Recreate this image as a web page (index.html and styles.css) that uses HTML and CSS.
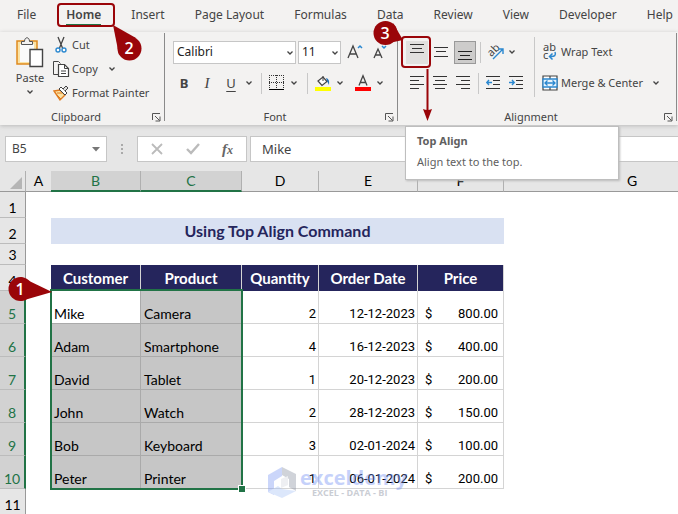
FILE: index.html
```html
<!DOCTYPE html>
<html lang="en">
<head>
<meta charset="utf-8">
<title>Using Top Align Command</title>
<link rel="stylesheet" href="styles.css">
</head>
<body>
<svg class="defs" aria-hidden="true">
  <symbol id="chev" viewBox="0 0 8 8"><path d="M1.500 2.500L4 5L6.500 2.500" fill="none" stroke="#444" stroke-width="1.300"/></symbol>
  <symbol id="launch" viewBox="0 0 9 9"><path d="M.5 7V.5H8M3 3l4.500 4.500M8 3.500V8H3.500" fill="none" stroke="#555"/></symbol>
</svg>

<nav class="tabs" aria-label="Ribbon tabs">
  <button>File</button><button class="active">Home</button><button>Insert</button><button>Page Layout</button><button>Formulas</button><button>Data</button><button>Review</button><button>View</button><button>Developer</button><button>Help</button>
</nav>

<div class="ribbon">
  <section class="group clipboard">
    <div class="tools">
      <button class="paste">
        <svg width="28" height="31" viewBox="0 0 28 31"><path d="M1 4h20v23H1z" fill="#fbe3a5" stroke="#e08a1e" stroke-width="1.500"/><path d="M4 7h14v18H4z" fill="#fafafa"/><path d="M5.500 7.500V4.500h3C8.500-.5 13.500-.5 13.500 4.500h3v3z" fill="#f3f2f1" stroke="#555"/><path d="M14 12.500h12.500v17H14z" fill="#fff" stroke="#444" stroke-width="1.400"/></svg>
        <span>Paste</span>
        <svg width="8" height="8"><use href="#chev"/></svg>
      </button>
      <div class="stack">
        <button><svg width="16" height="16" viewBox="0 0 16 16"><path d="M5 0l4.500 11M11 0L6.500 11" stroke="#444" stroke-width="1.300"/><circle cx="5" cy="13" r="2" fill="#fff" stroke="#2b88d0" stroke-width="1.400"/><circle cx="11" cy="13" r="2" fill="#fff" stroke="#2b88d0" stroke-width="1.400"/></svg>Cut</button>
        <button><svg width="16" height="16" viewBox="0 0 16 16"><path d="M5 13.500H.5V.5h5l2 2" fill="none" stroke="#444"/><path d="M5.500 3.500h6l4 4v8h-10z" fill="#fff" stroke="#444" stroke-width="1.200"/><path d="M11.500 3.500v4h4M8 10h5M8 12.500h5" fill="none" stroke="#444"/></svg>Copy<svg class="gap" width="8" height="8"><use href="#chev"/></svg></button>
        <button><svg width="16" height="16" viewBox="0 0 16 16"><path d="M1 6l6-1 5 5-5 5z" fill="#fbe3a5" stroke="#e07a1e" stroke-width="1.400"/><path d="M3 9l5 5M4 8h5" stroke="#e07a1e"/><path d="M6 4l2-2 6 6-2 2z" fill="#fff" stroke="#444"/><path d="M10 4l3-3 2 2-3 3" fill="#ddd" stroke="#444"/></svg>Format Painter</button>
      </div>
    </div>
    <footer><span>Clipboard</span><svg width="9" height="9"><use href="#launch"/></svg></footer>
  </section>

  <section class="group font">
    <div class="tools rows">
      <div class="row pickers">
        <label class="pick wide"><select aria-label="Font"><option>Calibri</option></select><svg width="8" height="8"><use href="#chev"/></svg></label>
        <label class="pick"><select aria-label="Font size"><option>11</option></select><svg width="8" height="8"><use href="#chev"/></svg></label>
        <button aria-label="Increase font size"><svg width="18" height="18" viewBox="0 0 18 18"><path d="M2 15L7 3l5 12M4 11h6" fill="none" stroke="#444" stroke-width="1.300"/><path d="M12 5l2-2 2 2" fill="none" stroke="#2b88d0" stroke-width="1.500"/></svg></button>
        <button aria-label="Decrease font size"><svg width="18" height="18" viewBox="0 0 18 18"><path d="M2 15L6 6l4 9M3.500 12h5" fill="none" stroke="#444" stroke-width="1.300"/><path d="M10 3l2 2 2-2" fill="none" stroke="#2b88d0" stroke-width="1.500"/></svg></button>
      </div>
      <div class="row format">
        <button class="b">B</button><button class="i">I</button><button class="u">U</button><svg width="8" height="8"><use href="#chev"/></svg>
        <i class="sep"></i>
        <button aria-label="Borders"><svg width="16" height="16" viewBox="0 0 16 16"><path d="M0 .5h15M0 7.500h15M.5 0v14M7.500 0v14M14.500 0v14" stroke="#333" stroke-dasharray="1 1"/><path d="M0 14.500h15" stroke="#000"/></svg></button><svg width="8" height="8"><use href="#chev"/></svg>
        <i class="sep"></i>
        <button aria-label="Fill color"><svg width="16" height="16" viewBox="0 0 16 16"><path d="M0 12h16v4H0z" fill="#ff0"/><path d="M3 6l5-4 4 4.500-5 4z" fill="#fff" stroke="#444" stroke-width="1.200"/><path d="M8 6V1" stroke="#444"/><path d="M11 3q4 1 3 7l-2-4z" fill="#2170b8"/></svg></button><svg width="8" height="8"><use href="#chev"/></svg>
        <i></i>
        <button aria-label="Font color"><svg width="16" height="16" viewBox="0 0 16 16"><path d="M0 12h16v4H0z" fill="red"/><path d="M4 10.500L8 .8l4 9.700M5.500 7.500h5" fill="none" stroke="#444" stroke-width="1.300"/></svg></button><svg width="8" height="8"><use href="#chev"/></svg>
      </div>
    </div>
    <footer><span>Font</span><svg width="9" height="9"><use href="#launch"/></svg></footer>
  </section>

  <section class="group align">
    <div class="tools">
      <div class="rows">
        <div class="row">
          <button class="hover" aria-label="Top Align"><svg width="14" height="16" viewBox="0 0 14 16"><path d="M0 .5h14M2 4.500h10M0 8.500h14" stroke="#333"/></svg></button>
          <button aria-label="Middle Align"><svg width="14" height="16" viewBox="0 0 14 16"><path d="M0 3.500h14M2 7.500h10M0 12.500h14" stroke="#333"/></svg></button>
          <button class="on" aria-label="Bottom Align"><svg width="14" height="16" viewBox="0 0 14 16"><path d="M0 7.500h14M2 11.500h10M0 15.500h14" stroke="#222"/></svg></button>
          <i class="sep"></i>
          <button aria-label="Orientation"><svg width="18" height="18" viewBox="0 0 18 18"><text x="0" y="12" transform="rotate(-45 5 8)">ab</text><path d="M6 16L16 6M11 6h5v5" fill="none" stroke="#2b88d0" stroke-width="1.400"/></svg></button><svg width="8" height="8"><use href="#chev"/></svg>
        </div>
        <div class="row">
          <button aria-label="Align left"><svg width="14" height="14" viewBox="0 0 14 14"><path d="M0 .5h14M0 4.500h9M0 8.500h14M0 12.500h9" stroke="#333"/></svg></button>
          <button aria-label="Center"><svg width="14" height="14" viewBox="0 0 14 14"><path d="M0 .5h14M2 4.500h10M0 8.500h14M2 12.500h10" stroke="#333"/></svg></button>
          <button aria-label="Align right"><svg width="14" height="14" viewBox="0 0 14 14"><path d="M0 .5h14M5 4.500h9M0 8.500h14M5 12.500h9" stroke="#333"/></svg></button>
          <i class="sep"></i>
          <button aria-label="Decrease indent"><svg width="14" height="14" viewBox="0 0 14 14"><path d="M0 .5h14M7 4.500h7M7 8.500h7M0 12.500h14" stroke="#333"/><path d="M6 6.500H1M3 4L.8 6.500L3 9" fill="none" stroke="#2b88d0" stroke-width="1.400"/></svg></button>
          <button aria-label="Increase indent"><svg width="14" height="14" viewBox="0 0 14 14"><path d="M0 .5h14M7 4.500h7M7 8.500h7M0 12.500h14" stroke="#333"/><path d="M0 6.500h5M3 4l2.200 2.500L3 9" fill="none" stroke="#2b88d0" stroke-width="1.400"/></svg></button>
        </div>
      </div>
      <i class="rule"></i>
      <div class="rows wrap">
        <button><svg width="16" height="16" viewBox="0 0 16 16"><text x="1" y="7">ab</text><text x="1" y="15">c</text><path d="M13 8q2 5-5 4.500M10.500 9.500L7.500 12.500l3 3" fill="none" stroke="#2b88d0" stroke-width="1.500"/></svg>Wrap Text</button>
        <button><svg width="16" height="16" viewBox="0 0 16 16"><path d="M1 1h14v14H1zM8 1v3M8 12v3" fill="#fff" stroke="#444" stroke-width="1.200"/><path d="M1 4h14v8H1z" fill="#e8f3fb" stroke="#2b88d0" stroke-width="1.300"/><path d="M3 8h10M5.500 5.500L3 8l2.500 2.500M10.500 5.500L13 8l-2.500 2.500" fill="none" stroke="#2b88d0" stroke-width="1.300"/></svg>Merge &amp; Center<svg class="gap" width="8" height="8"><use href="#chev"/></svg></button>
      </div>
    </div>
    <footer><span>Alignment</span><svg width="9" height="9"><use href="#launch"/></svg></footer>
  </section>
</div>

<div class="formula">
  <label class="box name"><input aria-label="Name box" value="B5"><svg width="8" height="5" viewBox="0 0 8 5"><path d="M0 0h8L4 4.500z" fill="#777"/></svg></label>
  <svg class="dots" width="2" height="11" viewBox="0 0 2 11"><path d="M0 0h2v2H0zM0 4h2v2H0zM0 8h2v2H0z" fill="#aaa"/></svg>
  <div class="box acts">
    <button aria-label="Cancel"><svg width="12" height="12" viewBox="0 0 12 12"><path d="M1 1l10 10M11 1L1 11" stroke="#bbb" stroke-width="1.800"/></svg></button>
    <button aria-label="Enter"><svg width="14" height="12" viewBox="0 0 14 12"><path d="M1 6l4 4 8-9" fill="none" stroke="#bbb" stroke-width="2.400"/></svg></button>
    <button class="fx" aria-label="Insert function">f<small>x</small></button>
  </div>
  <input class="box value" aria-label="Formula bar" value="Mike">
</div>

<main class="sheet">
<table>
  <colgroup><col class="c0"><col class="cA"><col class="cB"><col class="cC"><col class="cD"><col class="cE"><col class="cF"><col></colgroup>
  <thead><tr><th class="corner"><svg width="12" height="12" viewBox="0 0 12 12"><path d="M12 0v12H0z" fill="#b5b5b5"/></svg></th><th>A</th><th class="sel">B</th><th class="sel">C</th><th>D</th><th>E</th><th>F</th><th>G</th></tr></thead>
  <tbody>
    <tr class="r1"><th>1</th><td colspan="7"></td></tr>
    <tr class="r2"><th>2</th><td></td><td class="title" colspan="5">Using Top Align Command</td><td></td></tr>
    <tr class="r3"><th>3</th><td colspan="7"></td></tr>
    <tr class="heads"><th>4</th><td></td><td>Customer</td><td>Product</td><td>Quantity</td><td>Order Date</td><td>Price</td><td></td></tr>
    <tr class="data first"><th>5</th><td></td><td>Mike</td><td>Camera</td><td>2</td><td>12-12-2023</td><td><div><span>$</span><span>800.00</span></div></td><td></td></tr>
    <tr class="data"><th>6</th><td></td><td>Adam</td><td>Smartphone</td><td>4</td><td>16-12-2023</td><td><div><span>$</span><span>400.00</span></div></td><td></td></tr>
    <tr class="data"><th>7</th><td></td><td>David</td><td>Tablet</td><td>1</td><td>20-12-2023</td><td><div><span>$</span><span>200.00</span></div></td><td></td></tr>
    <tr class="data"><th>8</th><td></td><td>John</td><td>Watch</td><td>2</td><td>28-12-2023</td><td><div><span>$</span><span>150.00</span></div></td><td></td></tr>
    <tr class="data"><th>9</th><td></td><td>Bob</td><td>Keyboard</td><td>3</td><td>02-01-2024</td><td><div><span>$</span><span>100.00</span></div></td><td></td></tr>
    <tr class="data"><th>10</th><td></td><td>Peter</td><td>Printer</td><td>1</td><td>06-01-2024</td><td><div><span>$</span><span>200.00</span></div></td><td></td></tr>
    <tr class="r11"><th>11</th><td colspan="7"></td></tr>
  </tbody>
</table>
<div class="range"></div>
<div class="mark">
  <svg width="28" height="31" viewBox="0 0 28 31"><path d="M14 0L0 8v17l6 3V14l8-5z" fill="#7f9bf5"/><path d="M14 0l14 7v17l-7-4v-8l-7-4z" fill="#8b93a3"/><path d="M0 25l10-6 4 3 14 2-14 7z" fill="#a9c4f7"/><path d="M13 12l7-3v9l-7 3z" fill="#d5d9e0"/></svg>
  <div><b>exceldemy</b><span>EXCEL - DATA - BI</span></div>
</div>
</main>

<div class="tip" role="tooltip"><b>Top Align</b><span>Align text to the top.</span></div>

<svg class="notes" width="678" height="514" viewBox="0 0 678 514">
  <g fill="none" stroke="#9a0509" stroke-width="2"><rect x="58" y="4" width="56" height="22" rx="3"/><rect x="402" y="37" width="28" height="30" rx="3"/><path d="M427.500 69v42"/></g>
  <g fill="#9a0509">
    <path d="M423 109q4.500 2 9 0l-4.500 12z"/>
    <circle cx="129.500" cy="48.500" r="12"/><path d="M113 25l23 13-17 17z"/>
    <circle cx="385.500" cy="33" r="12"/><path d="M393 23l10 17-14 3z"/>
    <circle cx="20.500" cy="289" r="12"/><path d="M52 292l-31-15v24z"/>
  </g>
  <g class="nums" text-anchor="middle"><text x="129" y="54">2</text><text x="385" y="39">3</text><text x="20" y="295">1</text></g>
</svg>
</body>
</html>
```

FILE: styles.css
```css
* { box-sizing: border-box; }
body {
  margin: 0;
  position: relative;
  min-height: 100vh;
  overflow: hidden;
  background: #e6e6e6;
  color: #444;
  font: 12px/16px "Noto Sans", "Open Sans", sans-serif;
}
button, input, select { font: inherit; color: inherit; }
button { border: 0; padding: 0; background: none; white-space: nowrap; }
svg { flex: none; display: block; overflow: visible; }
.defs { position: absolute; width: 0; height: 0; }

/* Tabs */
.tabs {
  display: flex;
  justify-content: space-between;
  height: 32px;
  padding: 0 5px 0 17px;
  background: #f3f2f1;
}
.tabs button { height: 30px; }
.tabs .active {
  height: 25px;
  padding-top: 5px;
  border-bottom: 1px solid #217346;
  font-weight: 600;
}

/* Ribbon */
.ribbon { display: flex; height: 93px; background: #f3f2f1; box-shadow: 0 1px 4px #bbb; position: relative; font-size: 11px; }
.group {
  display: flex;
  flex-direction: column;
  margin: 1px 0 4px;
  border-right: 1px solid #8a8a8a;
}
.clipboard { flex: 0 0 165px; }
.font { flex: 0 0 233px; }
.align { flex: 1; margin-right: 1px; }
.tools { display: flex; flex: 1; padding-top: 4px; }
.group footer { display: flex; align-items: center; height: 8px; line-height: 8px; padding-right: 3px; }
.group footer span { flex: 1; text-align: center; }
.clipboard .tools { padding-left: 15px; gap: 8px; }
.paste { display: flex; flex-direction: column; align-items: center; width: 30px; height: 60px; gap: 2px; }
.stack button, .wrap button { display: flex; align-items: center; gap: 3px; height: 24px; }
.stack .gap { margin-left: 7px; }
.wrap .gap { margin-left: 6px; }
.stack { margin-top: -4px; }

.rows { display: flex; flex-direction: column; gap: 7px; padding-top: 3px; }
.font .rows { padding: 7px 0 0 8px; }
.row { display: flex; align-items: center; height: 24px; }
.row button { display: grid; place-items: center; width: 24px; height: 24px; }
.pickers { gap: 2px; }
.pick { position: relative; width: 43px; height: 23px; font-size: 12px; }
.pick.wide { width: 123px; }
.pick select {
  appearance: none;
  width: 100%;
  height: 100%;
  padding: 0 3px;
  border: 1px solid #c6c6c6;
  border-radius: 0;
  background: #fff;
  color: #222;
}
.pick svg { position: absolute; right: 2px; top: 8px; }
.format { display: grid; grid-template-columns: 22px 24px 24px 12px 12px 20px 14px 12px 20px 14px 6px 20px 14px; justify-items: center; }
.format button { width: 20px; }
.sep { width: 1px; height: 21px; background: #c8c8c8; }
.b { font-weight: 700; font-size: 13px; }
.i { font-style: italic; font-family: "Liberation Serif", serif; font-size: 15px; }
.u { text-decoration: underline; text-underline-offset: 3px; font-size: 13px; }
.align .rows { padding-left: 7px; }
.align .sep { margin: 0 3px; }
.align text { font-size: 11px; fill: #444; }
.row .hover, .row .on { width: 22px; height: 23px; margin: 0 1px; background: #e1e0de; }
.row .on { background: #cdcccb; outline: 1px solid #999; outline-offset: -1px; }
.rule { width: 1px; height: 60px; margin-left: 6px; background: #c8c8c8; }
.align .rows:first-child { width: 130px; }

/* Formula bar */
.formula { display: flex; align-items: center; height: 46px; padding: 2px 0 0 5px; font-size: 13px; }
.box { height: 26px; border: 1px solid #c6c6c6; background: #fff; }
.name { display: flex; align-items: center; width: 102px; padding: 0 6px; font-size: 12px; }
.name input { flex: 1; min-width: 0; border: 0; padding: 0; outline: 0; background: none; }
.dots { margin: 0 14px; }
.acts { display: flex; align-items: center; justify-content: space-between; width: 110px; padding: 0 13px; }
.acts .fx { font: italic 700 15px/16px "Liberation Serif", serif; color: #666; }
.fx small { font-size: 12px; }
.value { flex: 1; min-width: 0; margin-left: 3px; padding: 0 11px; border-right: 0; border-radius: 0; outline: 0; }

/* Sheet: the last column runs on past the window's edge */
.sheet { position: relative; background: #fff; }
table { width: calc(100% + 82px); table-layout: fixed; border-collapse: separate; border-spacing: 0; color: #000; font: 14px/16px Lato, "Open Sans", sans-serif; }
.c0 { width: 26px; }
.cA { width: 25px; }
.cB { width: 90px; }
.cC { width: 101px; }
.cD { width: 77px; }
.cE { width: 99px; }
.cF { width: 86px; }
th, td { padding: 0; font-weight: 400; }
th { background: #e6e6e6; }
thead th { height: 21px; border-right: 1px solid #b0b0b0; border-bottom: 1px solid #999; }
thead th:nth-child(2) { border-right: 0; }
thead th:last-child { border-right: 0; }
thead th.sel { background: #d2d2d2; border-bottom: 2px solid #217346; color: #217346; }
.corner svg { margin: 3px 0 0 10px; }
tbody th { border-right: 1px solid #999; border-bottom: 1px solid #bcbcbc; vertical-align: bottom; padding-bottom: 1px; }
.r1 th, .r2 th, .heads th { height: 26px; }
.r3 th { height: 21px; }
.r11 th { height: 26px; }
.title { background: #d9e1f2; color: #25255c; font-weight: 700; text-align: center; font-size: 16px; }
.heads td:not(:nth-child(2)):not(:last-child) { background: #25255c; color: #fff; font-size: 15px; font-weight: 700; text-align: center; border-right: 1px solid #d4d4d4; }
.data > * { height: 33px; vertical-align: bottom; }
.data th { background: #d2d2d2; color: #217346; border-right: 2px solid #217346; }
.data td { padding: 0 3px 1px; }
.data td:nth-child(n+3):nth-child(-n+7) { border-right: 1px solid #d4d4d4; border-bottom: 1px solid #d4d4d4; }
.data td:nth-child(3), .data td:nth-child(4) { background: #c6c6c6; border-color: #aaa !important; }
.data.first td:nth-child(3) { background: #fff; }
.data td:nth-child(n+5) { text-align: right; font: 13px/16px Roboto, sans-serif; padding-right: 2px; }
.data td div { display: flex; justify-content: space-between; padding: 0 3px 0 4px; }
.range { position: absolute; left: 50px; top: 118px; width: 193px; height: 201px; border: 2px solid #217346; }
.range::after { content: ""; position: absolute; right: -4px; bottom: -4px; width: 6px; height: 6px; background: #217346; outline: 1px solid #fff; }
.mark { position: absolute; left: 268px; top: 296px; display: flex; gap: 4px; opacity: .4; }
.mark div { display: flex; flex-direction: column; }
.mark b { color: #6f8ef5; font: 700 20px/22px "Open Sans", sans-serif; }
.mark span { padding-left: 12px; color: #7c8495; font: 700 9px/8px "Open Sans", sans-serif; }

/* Tooltip and callouts */
.tip {
  position: absolute;
  left: 405px;
  top: 126px;
  width: 214px;
  height: 54px;
  padding: 6px 11px;
  display: flex;
  flex-direction: column;
  gap: 5px;
  background: #fff;
  border: 1px solid #bebebe;
  box-shadow: 1px 1px 2px #bbb;
  color: #606060;
  font-size: 11px;
}
.notes { position: absolute; left: 0; top: 0; pointer-events: none; }
.nums { fill: #fff; font: 600 16px "Open Sans", sans-serif; }
```
